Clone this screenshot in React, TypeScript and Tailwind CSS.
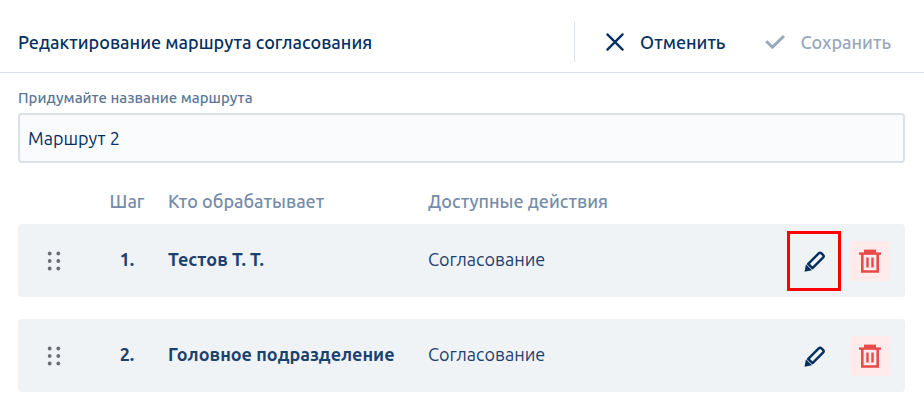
import React, { useState } from 'react';

type Step = { id: number; handler: string; action: string; highlighted?: boolean };

const initialSteps: Step[] = [
  { id: 1, handler: 'Тестов Т. Т.', action: 'Согласование', highlighted: true },
  { id: 2, handler: 'Головное подразделение', action: 'Согласование' },
];

const rowGrid = 'grid grid-cols-[72px_74px_260px_minmax(0,1fr)_auto] items-center';

function CrossIcon() {
  return (
    <svg width="20" height="20" viewBox="0 0 20 20" fill="none" stroke="currentColor" strokeWidth="2.3" strokeLinecap="round" aria-hidden="true">
      <path d="M2.4 2.4 17.6 17.6M17.6 2.4 2.4 17.6" />
    </svg>
  );
}

function CheckIcon() {
  return (
    <svg width="20" height="20" viewBox="0 0 20 20" fill="none" stroke="currentColor" strokeWidth="3" aria-hidden="true">
      <path d="M1.3 9.2 7.4 15.2 19 4" strokeLinejoin="miter" />
    </svg>
  );
}

function DragIcon() {
  return (
    <svg width="14" height="20" viewBox="0 0 14 20" fill="#6b6f75" aria-hidden="true">
      {[2.5, 10, 17.5].map((y) => (
        <React.Fragment key={y}>
          <circle cx="2.7" cy={y} r="1.9" />
          <circle cx="11.3" cy={y} r="1.9" />
        </React.Fragment>
      ))}
    </svg>
  );
}

function PencilIcon() {
  return (
    <svg width="22" height="22" viewBox="0 0 22 22" fill="none" aria-hidden="true">
      <path d="M5.2 13.9 15.7 3.4Q17.1 2 18.5 3.4L20 4.9Q21.4 6.3 20 7.7L9.5 18.2Z" stroke="currentColor" strokeWidth="2.4" strokeLinejoin="round" />
      <path d="M3 14.2 9 20.2 1.5 21.8Z" fill="currentColor" />
    </svg>
  );
}

function TrashIcon() {
  return (
    <svg width="24" height="24" viewBox="0 0 24 24" fill="none" stroke="currentColor" aria-hidden="true">
      <path d="M6 .6h12v4H6z" fill="currentColor" stroke="none" />
      <path d="M1 4.6h22" strokeWidth="2.4" />
      <path d="M4.3 5v17.5h15.4V5" strokeWidth="2.6" />
      <path d="M9.5 8.5v10M14.5 8.5v10" strokeWidth="2.4" />
    </svg>
  );
}

export default function App() {
  const [name, setName] = useState('Маршрут 2');

  return (
    <div className="min-h-screen bg-white font-['Ubuntu','Noto_Sans',sans-serif] text-[#052f5f]">
      <header className="flex h-[73px] items-center border-b border-[#dae1e8] pt-3 pl-[18px] pr-[33px]">
        <h1 className="flex-1 text-[18px] leading-6 font-medium whitespace-nowrap">Редактирование маршрута согласования</h1>
        <div className="flex h-10 items-center gap-10 border-l border-[#dae1e8] pl-[30px]">
          <button type="button" className="flex items-center gap-[15px] text-[18px] leading-6 font-medium">
            <CrossIcon />
            Отменить
          </button>
          <button type="button" disabled className="flex items-center gap-[15px] text-[18px] leading-6 font-medium text-[#98a8bb]">
            <CheckIcon />
            Сохранить
          </button>
        </div>
      </header>

      <main className="pt-[15px] pr-[19px] pb-5 pl-[18px]">
        <label htmlFor="route-name" className="block text-[15px] leading-5 font-medium text-[#5a7799]">
          Придумайте название маршрута
        </label>
        <input
          id="route-name"
          type="text"
          value={name}
          onChange={(e) => setName(e.target.value)}
          className="mt-[5px] block h-[50px] w-full rounded-sm border-2 border-[#dae1e8] bg-[#fafbfd] px-2 text-[18px] text-[#052f5f] outline-none"
        />

        <table className="mt-[26px] block text-[18px] leading-6">
          <thead className="block pb-[11px]">
            <tr className={`${rowGrid} text-left text-[#768ca8]`}>
              <td />
              <th scope="col" className="text-center font-medium">Шаг</th>
              <th scope="col" className="pl-1 font-medium whitespace-nowrap">Кто обрабатывает</th>
              <th scope="col" className="pl-1 font-medium whitespace-nowrap">Доступные действия</th>
              <td />
            </tr>
          </thead>
          <tbody className="flex flex-col gap-[22px] text-[#1c416d]">
            {initialSteps.map((step) => (
              <tr key={step.id} className={`${rowGrid} h-[73px] rounded bg-[#eff3f6]`}>
                <td className="flex justify-center">
                  <button type="button" aria-label="Переместить шаг" className="cursor-grab">
                    <DragIcon />
                  </button>
                </td>
                <td className="pb-[3px] text-center font-bold">{step.id}.</td>
                <td className="pb-[3px] pl-1 font-bold whitespace-nowrap">{step.handler}</td>
                <td className="pb-[3px] pl-1">{step.action}</td>
                <td className="flex gap-4 pr-[15px]">
                  <button type="button" aria-label="Изменить" className="relative flex size-10 items-center justify-center text-[#052f5f]">
                    <PencilIcon />
                    {step.highlighted && <span className="pointer-events-none absolute -inset-x-[7px] -inset-y-[10px] border-3 border-[#ff0000]" />}
                  </button>
                  <button type="button" aria-label="Удалить" className="flex size-10 items-center justify-center rounded bg-[#ffebeb] text-[#e84a4a]">
                    <TrashIcon />
                  </button>
                </td>
              </tr>
            ))}
          </tbody>
        </table>
      </main>
    </div>
  );
}
